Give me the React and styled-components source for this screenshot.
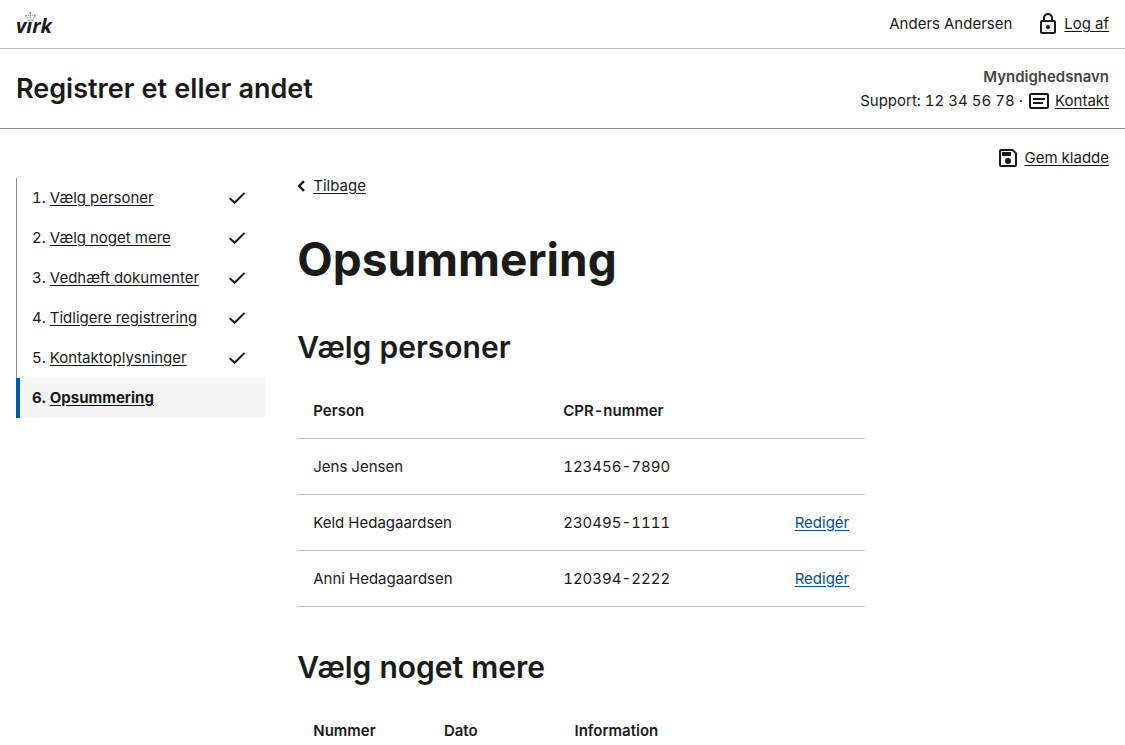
import React from 'react';
import styled, { createGlobalStyle, css } from 'styled-components';

const GlobalStyle = createGlobalStyle`
  *, *::before, *::after { box-sizing: border-box; }
  body {
    margin: 0;
    background: #fff;
    color: #1a1a1a;
    font-family: Inter, Roboto, "Liberation Sans", sans-serif;
    font-size: 15px;
    font-variant-numeric: tabular-nums;
    line-height: 24px;
  }
`;

const Shell = styled.div`
  height: 100vh;
  overflow-y: auto;
  scrollbar-width: none;
`;

const TopBar = styled.header`
  display: flex;
  align-items: center;
  justify-content: space-between;
  min-height: 49px;
  padding: 0 16px;
  border-bottom: 1px solid #bfbfbf;
`;

const Logo = styled.a`
  padding-top: 4px;
  color: inherit;
  font-family: "Open Sans", sans-serif;
  font-size: 20px;
  font-weight: 700;
  font-style: italic;
  line-height: 24px;
  text-decoration: none;
`;

const Wordmark = styled.span`
  position: relative;
`;

const Crown = styled.svg`
  position: absolute;
  top: 0;
  left: 9px;
  width: 11px;
  height: 9px;
  fill: #8a8a8a;
`;

const UserArea = styled.div`
  display: flex;
  align-items: center;
  gap: 24px;
`;

const Link = styled.a`
  color: ${({ $accent }) => ($accent ? '#004d99' : 'inherit')};
  text-decoration: underline;
  text-underline-offset: 2px;
`;

const IconLink = styled.a`
  display: inline-flex;
  align-items: center;
  gap: ${({ $gap = 4 }) => $gap}px;
  color: inherit;
  text-decoration: none;
`;

const LinkText = styled.span`
  text-decoration: underline;
  text-underline-offset: 2px;
`;

const Icon = styled.svg`
  flex: none;
  width: 24px;
  height: 24px;
  fill: currentColor;
`;

const SolutionBar = styled.div`
  display: flex;
  align-items: center;
  justify-content: space-between;
  min-height: 80px;
  padding: 16px 16px 15px;
  border-bottom: 1px solid #8c8c8c;
`;

const SolutionTitle = styled.p`
  margin: 0;
  font-size: 27px;
  font-weight: 600;
  line-height: 32px;
`;

const Authority = styled.div`
  text-align: right;
`;

const AuthorityName = styled.p`
  margin: 0;
  color: #454545;
  font-weight: 600;
`;

const Support = styled.div`
  display: flex;
  align-items: center;
  justify-content: flex-end;
  gap: 4px;
`;

const Page = styled.div`
  padding: 17px 16px 0;
`;

const Actions = styled.div`
  display: flex;
  justify-content: flex-end;
`;

const Columns = styled.div`
  display: grid;
  grid-template-columns: repeat(12, minmax(0, 1fr));
  align-items: start;
  column-gap: 32px;
  padding-top: 4px;
`;

const StepNav = styled.nav`
  grid-column: span 3;
  padding-top: 4px;
`;

const StepList = styled.ol`
  margin: 0;
  padding: 0;
  list-style: none;
`;

const Step = styled.li`
  display: flex;
  align-items: center;
  justify-content: space-between;
  height: 40px;
  padding: 0 16px 0 15px;
  border-left: 1px solid #8c8c8c;
  ${({ $current }) => $current && css`
    padding-left: 12px;
    border-left: 4px solid #0059b3;
    background: #f5f5f5;
    font-weight: 700;
  `}
`;

const Main = styled.main`
  grid-column: span 9;
  max-width: 568px;
`;

const Heading = styled.h1`
  margin: 32px 0 40px;
  font-size: 46px;
  font-weight: 700;
  line-height: 56px;
`;

const Section = styled.section`
  margin-bottom: 40px;
`;

const SectionHeading = styled.h2`
  margin: 0 0 16px;
  font-size: 30px;
  font-weight: 600;
  line-height: 40px;
`;

const Table = styled.table`
  width: 100%;
  border-collapse: separate;
  border-spacing: 0;
  table-layout: fixed;
`;

const cell = css`
  height: 56px;
  padding: 0 16px;
  border-bottom: 1px solid #bfbfbf;
  text-align: ${({ $align = 'left' }) => $align};
`;

const HeadCell = styled.th`
  ${cell}
  width: ${({ $width }) => $width || 'auto'};
  font-weight: 600;
`;

const Cell = styled.td`
  ${cell}
`;

const CheckIcon = () => (
  <Icon viewBox="0 0 24 24" role="img" aria-label="Udfyldt">
    <path d="M4.700 12.200 9.600 16.800 19.500 6.900" fill="none" stroke="currentColor" strokeWidth="2" />
  </Icon>
);

const LockIcon = () => (
  <Icon viewBox="0 0 24 24" aria-hidden="true">
    <path d="M18 8h-1V6c0-2.76-2.24-5-5-5S7 3.24 7 6v2H6c-1.1 0-2 .9-2 2v10c0 1.1.9 2 2 2h12c1.1 0 2-.9 2-2V10c0-1.1-.9-2-2-2zM9 6c0-1.66 1.34-3 3-3s3 1.34 3 3v2H9V6zm9 14H6V10h12v10zm-6-3c1.1 0 2-.9 2-2s-.9-2-2-2-2 .9-2 2 .9 2 2 2z" />
  </Icon>
);

const MessageIcon = () => (
  <Icon viewBox="0 0 24 24" aria-hidden="true">
    <path fillRule="evenodd" d="M4 4h16a2 2 0 0 1 2 2v12a2 2 0 0 1-2 2H4a2 2 0 0 1-2-2V6c0-1.100.9-2 2-2zm0 2v12h16V6H4zm2 3h12v2H6V9zm0 4h10v2H6v-2z" />
  </Icon>
);

const SaveIcon = () => (
  <Icon viewBox="0 0 24 24" aria-hidden="true">
    <path fillRule="evenodd" d="M17 3H5a2 2 0 0 0-2 2v14a2 2 0 0 0 2 2h14a2 2 0 0 0 2-2V7l-4-4zm2 16H5V5h11.170L19 7.830V19zm-7-7a3 3 0 1 0 0 6 3 3 0 0 0 0-6zM6 6h9v4H6V6z" />
  </Icon>
);

const BackIcon = styled.svg`
  width: 8px;
  height: 12px;
  fill: none;
  stroke: currentColor;
  stroke-width: 2.4;
`;

const steps = [
  'Vælg personer',
  'Vælg noget mere',
  'Vedhæft dokumenter',
  'Tidligere registrering',
  'Kontaktoplysninger',
  'Opsummering',
];

const persons = [
  { name: 'Jens Jensen', cpr: '123456-7890', editable: false },
  { name: 'Keld Hedagaardsen', cpr: '230495-1111', editable: true },
  { name: 'Anni Hedagaardsen', cpr: '120394-2222', editable: true },
];

export default function App() {
  return (
    <Shell>
      <GlobalStyle />
      <TopBar>
        <Logo href="#" aria-label="virk">
          <Wordmark>
            vırk
            <Crown viewBox="0 0 11 9" aria-hidden="true">
              <circle cx="5.500" cy="1" r="1" />
              <circle cx="1.200" cy="3.800" r="1" />
              <circle cx="3.600" cy="3.300" r=".6" />
              <circle cx="7.400" cy="3.300" r=".6" />
              <circle cx="9.800" cy="3.800" r="1" />
              <circle cx="5.500" cy="3.600" r=".8" />
              <circle cx="2.200" cy="5.800" r=".7" />
              <circle cx="8.800" cy="5.800" r=".7" />
              <circle cx="5.500" cy="5.600" r=".8" />
              <path d="M2.500 7.200q3 1 6 0v1.300q-3 .6-6 0z" />
            </Crown>
          </Wordmark>
        </Logo>
        <UserArea>
          <span>Anders Andersen</span>
          <IconLink href="#"><LockIcon /><LinkText>Log af</LinkText></IconLink>
        </UserArea>
      </TopBar>
      <SolutionBar>
        <SolutionTitle>Registrer et eller andet</SolutionTitle>
        <Authority>
          <AuthorityName>Myndighedsnavn</AuthorityName>
          <Support>
            <span>Support: 12 34 56 78 ·</span>
            <IconLink href="#"><MessageIcon /><LinkText>Kontakt</LinkText></IconLink>
          </Support>
        </Authority>
      </SolutionBar>
      <Page>
        <Actions>
          <IconLink href="#"><SaveIcon /><LinkText>Gem kladde</LinkText></IconLink>
        </Actions>
        <Columns>
          <StepNav aria-label="Trin">
            <StepList>
              {steps.map((label, i) => {
                const current = i === steps.length - 1;
                return (
                  <Step key={label} $current={current} aria-current={current ? 'step' : undefined}>
                    <span>{i + 1}. <Link href="#">{label}</Link></span>
                    {!current && <CheckIcon />}
                  </Step>
                );
              })}
            </StepList>
          </StepNav>
          <Main>
            <IconLink href="#" $gap={8}>
              <BackIcon viewBox="0 0 8 12" aria-hidden="true"><path d="M7 1.200 2.200 6l4.800 4.800" /></BackIcon>
              <LinkText>Tilbage</LinkText>
            </IconLink>
            <Heading>Opsummering</Heading>
            <Section>
              <SectionHeading>Vælg personer</SectionHeading>
              <Table>
                <thead>
                  <tr>
                    <HeadCell scope="col" $width="44%">Person</HeadCell>
                    <HeadCell scope="col">CPR-nummer</HeadCell>
                    <HeadCell as="td" $width="88px" />
                  </tr>
                </thead>
                <tbody>
                  {persons.map(({ name, cpr, editable }) => (
                    <tr key={cpr}>
                      <Cell>{name}</Cell>
                      <Cell>{cpr}</Cell>
                      <Cell $align="right">{editable && <Link $accent href="#">Redigér</Link>}</Cell>
                    </tr>
                  ))}
                </tbody>
              </Table>
            </Section>
            <Section>
              <SectionHeading>Vælg noget mere</SectionHeading>
              <Table>
                <thead>
                  <tr>
                    <HeadCell scope="col" $width="23%">Nummer</HeadCell>
                    <HeadCell scope="col" $width="23%">Dato</HeadCell>
                    <HeadCell scope="col">Information</HeadCell>
                  </tr>
                </thead>
              </Table>
            </Section>
          </Main>
        </Columns>
      </Page>
    </Shell>
  );
}
